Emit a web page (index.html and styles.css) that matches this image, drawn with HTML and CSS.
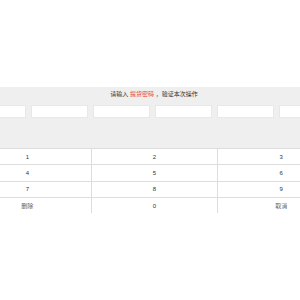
FILE: index.html
```html
<!DOCTYPE html>
<html lang="zh">
<head>
<meta charset="utf-8">
<link rel="stylesheet" href="styles.css">
</head>
<body>
<div class="page">
  <div class="panel">
    <div class="head">
      <p class="tip">请输入 <span class="hl">提货密码</span> ，验证本次操作</p>
      <div class="boxes">
        <div class="box"></div>
        <div class="box"></div>
        <div class="box"></div>
        <div class="box"></div>
        <div class="box"></div>
        <div class="box"></div>
      </div>
    </div>
    <div class="keys">
      <div class="key">1</div>
      <div class="key">2</div>
      <div class="key">3</div>
      <div class="key">4</div>
      <div class="key">5</div>
      <div class="key">6</div>
      <div class="key">7</div>
      <div class="key">8</div>
      <div class="key">9</div>
      <div class="key fn">删除</div>
      <div class="key">0</div>
      <div class="key fn">取消</div>
    </div>
  </div>
</div>
</body>
</html>
```
FILE: styles.css
```css
html, body {
  margin: 0;
  padding: 0;
  background: #ffffff;
  width: 300px;
  height: 300px;
  overflow: hidden;
}
.page {
  display: flex;
  justify-content: center;
  padding-left: 8px;
  width: 292px;
  font-family: "Liberation Sans", "Noto Sans CJK SC", sans-serif;
}
.panel {
  flex: 0 0 380px;
  width: 380px;
  margin-top: 87px;
}
.head {
  background: #efefef;
  height: 61px;
  padding-top: 3px;
  box-sizing: border-box;
}
.tip {
  margin: 0;
  text-align: center;
  font-size: 6px;
  line-height: 9px;
  color: #333333;
}
.hl {
  color: #e64340;
}
.boxes {
  display: flex;
  gap: 5px;
  padding-left: 4.5px;
  margin-top: 5.5px;
}
.box {
  flex: 0 0 57px;
  height: 13.5px;
  background: #ffffff;
  box-sizing: border-box;
  border: 1px solid #e8e8e8;
}
.keys {
  display: grid;
  grid-template-columns: repeat(3, 1fr);
  grid-auto-rows: 16.33px;
}
.key {
  display: flex;
  align-items: center;
  justify-content: center;
  border-top: 1px solid #dddddd;
  box-sizing: border-box;
  font-size: 6px;
  color: #333333;
}
.key:nth-child(3n+2),
.key:nth-child(3n) {
  border-left: 1px solid #dddddd;
}
.key.fn {
  color: #666666;
}
```
